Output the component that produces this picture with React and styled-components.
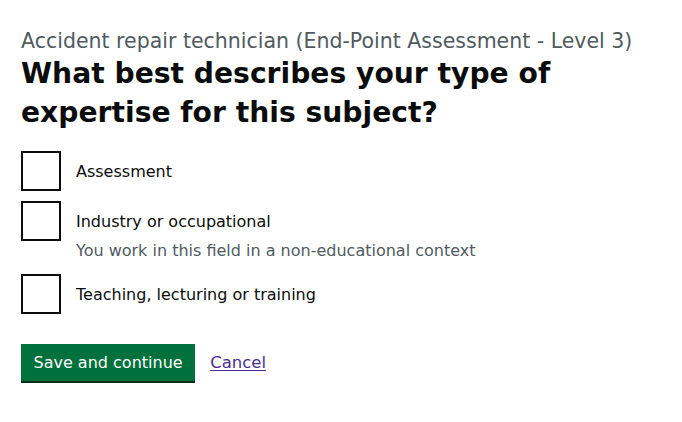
import styled, { createGlobalStyle } from "styled-components";

const GlobalStyle = createGlobalStyle`
  body {
    margin: 0;
    background: #ffffff;
    font-family: "DejaVu Sans", "Liberation Sans", Arial, sans-serif;
    color: #0b0c0c;
    -webkit-font-smoothing: antialiased;
  }
`;

const Page = styled.main`
  padding: 29px 21px 40px;
`;

const Caption = styled.span`
  display: block;
  font-size: 20.5px;
  line-height: 25px;
  color: #505a5f;
`;

const Heading = styled.h1`
  margin: 0 0 19px;
  font-size: 28.2px;
  line-height: 39px;
  font-weight: 700;
  color: #0b0c0c;
`;

const Fieldset = styled.fieldset`
  margin: 0 0 30px;
  padding: 0;
  border: 0;
  display: flex;
  flex-direction: column;
  gap: 10px;
`;

const Item = styled.div`
  display: flex;
  align-items: flex-start;
  min-height: 40px;
`;

const Box = styled.input.attrs({ type: "checkbox" })`
  appearance: none;
  flex-shrink: 0;
  width: 40px;
  height: 40px;
  margin: 0;
  border: 2px solid #0b0c0c;
  background: #ffffff;
  cursor: pointer;
`;

const Text = styled.div`
  padding-left: 15px;
`;

const Label = styled.label`
  display: block;
  padding-top: 11px;
  font-size: 16px;
  line-height: 20px;
  cursor: pointer;
`;

const Hint = styled.div`
  margin-top: 9px;
  padding-bottom: 3px;
  font-size: 16px;
  line-height: 20px;
  color: #505a5f;
`;

const ButtonGroup = styled.div`
  display: flex;
  align-items: center;
  gap: 15px;
`;

const Button = styled.button`
  font-family: inherit;
  font-size: 16px;
  line-height: 19px;
  color: #ffffff;
  background: #00703c;
  border: 2px solid transparent;
  border-radius: 0;
  padding: 7px 10.5px 7px;
  box-shadow: 0 2px 0 #002d18;
  cursor: pointer;
`;

const Link = styled.a`
  font-size: 16.5px;
  line-height: 20px;
  color: #4c2c92;
  text-decoration: underline;
  text-decoration-thickness: 1px;
  text-underline-offset: 0.15em;
`;

const options = [
  { id: "assessment", label: "Assessment" },
  {
    id: "industry",
    label: "Industry or occupational",
    hint: "You work in this field in a non-educational context",
  },
  { id: "teaching", label: "Teaching, lecturing or training" },
];

export default function App() {
  return (
    <>
      <GlobalStyle />
      <Page>
        <Caption>Accident repair technician (End-Point Assessment - Level 3)</Caption>
        <Heading>What best describes your type of expertise for this subject?</Heading>
        <Fieldset>
          {options.map((o) => (
            <Item key={o.id}>
              <Box id={o.id} name="expertise" value={o.id} />
              <Text>
                <Label htmlFor={o.id}>{o.label}</Label>
                {o.hint && <Hint>{o.hint}</Hint>}
              </Text>
            </Item>
          ))}
        </Fieldset>
        <ButtonGroup>
          <Button type="submit">Save and continue</Button>
          <Link href="#">Cancel</Link>
        </ButtonGroup>
      </Page>
    </>
  );
}
